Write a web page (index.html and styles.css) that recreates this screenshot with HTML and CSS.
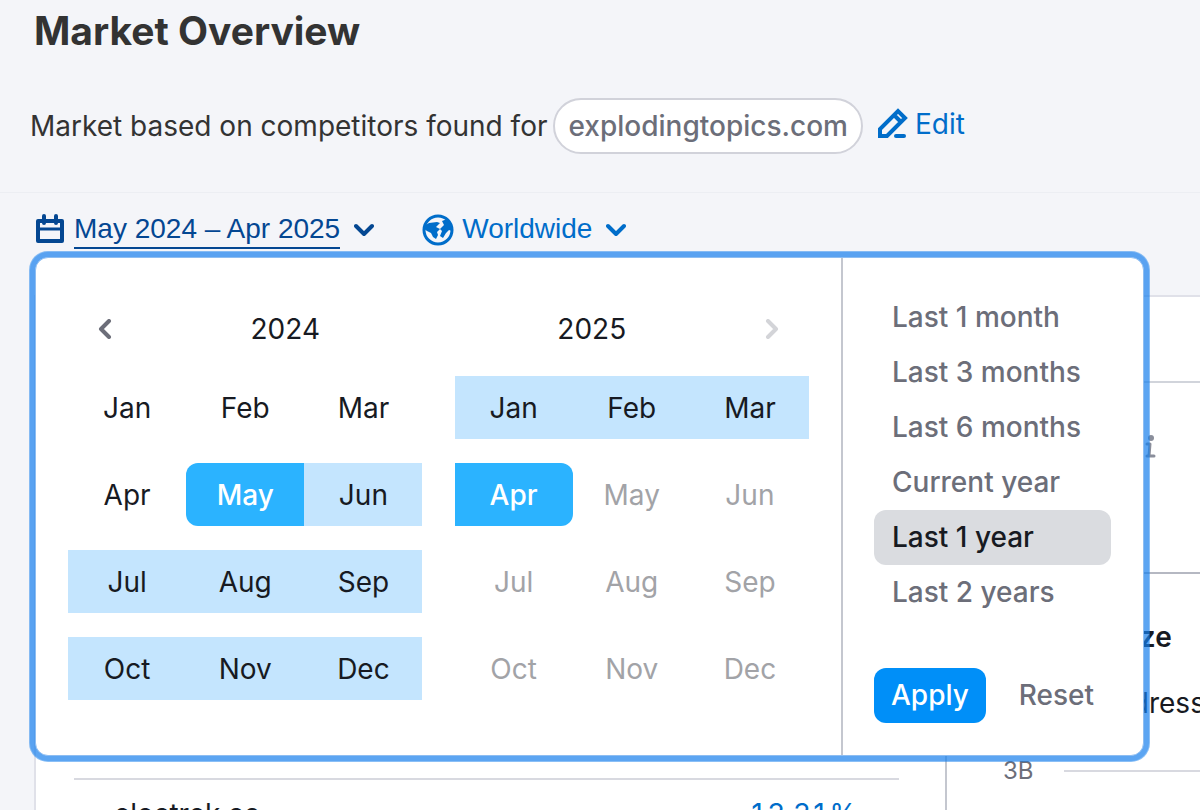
FILE: index.html
```html
<!DOCTYPE html>
<html lang="en">
  <head>
    <meta charset="utf-8" />
    <meta name="viewport" content="width=device-width, initial-scale=1" />
    <title>Market Overview</title>
    <link rel="stylesheet" href="styles.css" />
  </head>
  <body>
    <header class="header">
      <h1>Market Overview</h1>
      <div class="based-on">
        <span>Market based on competitors found for</span>
        <span class="domain">explodingtopics.com</span>
        <a href="#" class="edit">
          <svg width="32" height="32" viewBox="0 0 32 32" fill="none" stroke="currentColor" stroke-width="4">
            <path d="M3 28v-7L21 3l7 7L10 28z M17 7l7 7" />
            <path d="M19 28h8" stroke-linecap="round" />
          </svg>
          <span>Edit</span>
        </a>
      </div>
    </header>

    <div class="filters">
      <button type="button" class="filter active" aria-expanded="true">
        <svg width="30" height="32" viewBox="0 0 30 32" fill="none" stroke="currentColor" stroke-width="4" stroke-linejoin="round">
          <path d="M2 7h24v20H2z" />
          <path d="M2 15h24" stroke-width="3" />
          <path d="M8 2v7M20 2v7" stroke-linecap="round" />
        </svg>
        <span class="filter-text">May 2024 – Apr 2025</span>
        <svg class="arrow" width="20" height="14" viewBox="0 0 20 14" fill="none" stroke="currentColor" stroke-width="4" stroke-linecap="round" stroke-linejoin="round">
          <path d="M2 3l8 8 8-8" />
        </svg>
      </button>
      <button type="button" class="filter">
        <svg width="32" height="32" viewBox="0 0 32 32">
          <circle cx="16" cy="16" r="14" fill="none" stroke="currentColor" stroke-width="3" />
          <path d="M2 12l5-3 8-1 3 1-4 4 4 2-3 3 1 3-2 4-3-2-2-4-4-2-3-2z" fill="currentColor" />
          <path d="M20 7l5-2 4 6 1 6-3-1-3 3-3 5-3-2 2-5-2-2 4-4z" fill="currentColor" />
        </svg>
        <span class="filter-text">Worldwide</span>
        <svg class="arrow" width="20" height="14" viewBox="0 0 20 14" fill="none" stroke="currentColor" stroke-width="4" stroke-linecap="round" stroke-linejoin="round">
          <path d="M2 3l8 8 8-8" />
        </svg>
      </button>

      <div class="popper">
        <div class="calendars">
          <div class="calendar">
            <div class="calendar-head">
              <button type="button" class="nav prev" aria-label="Previous year">
                <svg width="14" height="20" viewBox="0 0 14 20" fill="none" stroke="currentColor" stroke-width="4" stroke-linecap="round" stroke-linejoin="round">
                  <path d="M11 2l-8 8 8 8" />
                </svg>
              </button>
              <span class="year">2024</span>
            </div>
            <div class="months">
              <button type="button" class="month">Jan</button>
              <button type="button" class="month">Feb</button>
              <button type="button" class="month">Mar</button>
              <button type="button" class="month">Apr</button>
              <button type="button" class="month start">May</button>
              <button type="button" class="month in-range">Jun</button>
              <button type="button" class="month in-range">Jul</button>
              <button type="button" class="month in-range">Aug</button>
              <button type="button" class="month in-range">Sep</button>
              <button type="button" class="month in-range">Oct</button>
              <button type="button" class="month in-range">Nov</button>
              <button type="button" class="month in-range">Dec</button>
            </div>
          </div>
          <div class="calendar">
            <div class="calendar-head">
              <span class="year">2025</span>
              <button type="button" class="nav next" aria-label="Next year" disabled>
                <svg width="14" height="20" viewBox="0 0 14 20" fill="none" stroke="currentColor" stroke-width="4" stroke-linecap="round" stroke-linejoin="round">
                  <path d="M3 2l8 8-8 8" />
                </svg>
              </button>
            </div>
            <div class="months">
              <button type="button" class="month in-range">Jan</button>
              <button type="button" class="month in-range">Feb</button>
              <button type="button" class="month in-range">Mar</button>
              <button type="button" class="month end">Apr</button>
              <button type="button" class="month" disabled>May</button>
              <button type="button" class="month" disabled>Jun</button>
              <button type="button" class="month" disabled>Jul</button>
              <button type="button" class="month" disabled>Aug</button>
              <button type="button" class="month" disabled>Sep</button>
              <button type="button" class="month" disabled>Oct</button>
              <button type="button" class="month" disabled>Nov</button>
              <button type="button" class="month" disabled>Dec</button>
            </div>
          </div>
        </div>
        <div class="periods">
          <button type="button" class="period">Last 1 month</button>
          <button type="button" class="period">Last 3 months</button>
          <button type="button" class="period">Last 6 months</button>
          <button type="button" class="period">Current year</button>
          <button type="button" class="period selected">Last 1 year</button>
          <button type="button" class="period">Last 2 years</button>
          <div class="actions">
            <button type="button" class="apply">Apply</button>
            <button type="button" class="reset">Reset</button>
          </div>
        </div>
      </div>
    </div>

    <main class="report">
      <div class="report-head"></div>
      <div class="report-body">
        <section class="domains">
          <div class="domain-row"><span>gizmodo.com</span></div>
          <div class="domain-row">
            <span>electrek.co</span>
            <a href="#">13.31%</a>
          </div>
        </section>
        <section class="market">
          <div class="summary">
            <svg width="12" height="24" viewBox="0 0 12 24" fill="none" stroke="currentColor" stroke-width="3" stroke-linecap="round" stroke-linejoin="round">
              <path d="M2 9h3l-1 12M2 21h7" />
              <circle cx="6" cy="3" r="3" fill="currentColor" stroke="none" />
            </svg>
          </div>
          <h2>Market Size</h2>
          <div class="legend"><i class="dot"></i>Total Addressable Market</div>
          <div class="axis"><span>3B</span></div>
        </section>
      </div>
    </main>
  </body>
</html>
```

FILE: styles.css
```css
* {
  box-sizing: border-box;
}

body {
  margin: 0;
  height: 100vh;
  overflow: hidden;
  display: flex;
  flex-direction: column;
  background: #f4f5f9;
  color: #171a22;
  font-family: Inter, sans-serif;
  font-size: 28px;
  line-height: 36px;
}

button {
  border: 0;
  padding: 0;
  background: none;
  color: inherit;
  font: inherit;
  cursor: pointer;
}

a {
  color: #006dca;
  text-decoration: none;
}

svg {
  flex: none;
}

/* header */

.header {
  flex: none;
  padding: 7px 30px 38px;
  border-bottom: 1px solid #eceef3;
  color: #333;
}

h1 {
  margin: 0 4px 43px;
  font-size: 39px;
  line-height: 48px;
  font-weight: 700;
}

.based-on {
  display: flex;
  align-items: center;
  gap: 6px;
}

.domain {
  padding: 8px 13px;
  border: 2px solid #d1d2da;
  border-radius: 28px;
  background: #fff;
  color: #6c6e79;
  font-weight: 500;
}

.edit {
  display: flex;
  align-items: center;
  gap: 6px;
  margin: 0 0 4px 8px;
}

/* filters */

.filters {
  position: relative;
  flex: none;
  display: flex;
  gap: 48px;
  padding: 18px 36px 46px;
}

.filter {
  display: flex;
  align-items: center;
  gap: 8px;
  color: #006dca;
  font-family: "Liberation Sans", Arial, sans-serif;
}

.filter.active {
  color: #044792;
}

.filter-text {
  border-bottom: 2px solid transparent;
}

.active .filter-text {
  border-color: currentColor;
}

.arrow {
  margin-left: 6px;
}

/* date popup */

.popper {
  position: absolute;
  z-index: 1;
  top: 64px;
  left: 35px;
  right: 56px;
  display: flex;
  border: 1px solid #8dbdf2;
  border-radius: 13px;
  background: #fff;
  box-shadow: 0 0 0 5px rgba(22, 128, 237, 0.4),
    0 0 0 6px rgba(22, 128, 237, 0.5);
}

.calendars {
  flex: 1;
  display: flex;
  gap: 32px;
  padding: 32px;
}

.calendar {
  flex: 1;
}

.calendar-head {
  display: flex;
  height: 78px;
  margin-bottom: 8px;
  align-items: center;
}

.nav {
  width: 80px;
  height: 56px;
  color: #6c6e79;
}

.nav:disabled {
  color: #d3d4d8;
}

.prev {
  padding-right: 6px;
}

.next {
  padding-left: 6px;
}

.year {
  flex: 1;
  text-align: center;
}

.months {
  display: grid;
  grid-template-columns: repeat(3, 1fr);
  row-gap: 24px;
}

.month {
  height: 63px;
}

.month:disabled {
  color: #a2a3a7;
}

.in-range {
  background: #c4e5fe;
}

.start,
.end {
  background: #2bb3ff;
  color: #fff;
  font-weight: 500;
}

.start {
  border-radius: 12px 0 0 12px;
}

.end {
  border-radius: 0 12px 12px 0;
}

.periods {
  display: flex;
  flex-direction: column;
  width: 302px;
  padding: 32px 32px 32px 31px;
  border-left: 2px solid #c4c7cf;
}

.period {
  height: 55px;
  padding: 0 18px 2px;
  border-radius: 12px;
  color: #6c6e79;
  font-weight: 500;
  text-align: left;
}

.period.selected {
  background: #dadce0;
  color: #171a22;
}

.actions {
  display: flex;
  margin-top: 48px;
}

.apply,
.reset {
  height: 55px;
  padding: 0 17px 2px;
  border-radius: 12px;
  font-weight: 500;
}

.apply {
  margin-right: 16px;
  background: #008ff8;
  color: #fff;
}

.reset {
  color: #6c6e79;
}

/* report */

.report {
  flex: 1;
  display: flex;
  flex-direction: column;
  min-height: 0;
  margin-left: 34px;
  border: solid #e0e1e9;
  border-width: 2px 0 0 2px;
  background: #fff;
}

.report-head {
  flex: none;
  height: 86px;
  border-bottom: 2px solid #d1d4db;
}

.report-body {
  flex: 1;
  display: flex;
}

.domains {
  flex: 1;
  padding: 309px 46px 0 38px;
  border-right: 2px solid #c4c7cf;
}

.domain-row {
  display: flex;
  justify-content: space-between;
  height: 88px;
  padding: 16px 42px 0 40px;
  border-bottom: 2px solid #d8d9e0;
  font-variant-numeric: tabular-nums;
}

.market {
  width: 253px;
  white-space: nowrap;
}

.summary {
  display: flex;
  align-items: center;
  height: 191px;
  padding: 0 0 62px 198px;
  border-bottom: 2px solid #b5b8c2;
  color: #8a8e9b;
}

h2 {
  margin: 45px 0 30px 65px;
  font-size: 28px;
  line-height: 36px;
  font-weight: 600;
}

.legend {
  display: flex;
  align-items: center;
  gap: 8px;
  margin-left: 48px;
}

.dot {
  flex: none;
  width: 20px;
  height: 20px;
  border-radius: 6px;
  background: #2bb3ff;
}

.axis {
  display: flex;
  align-items: center;
  gap: 30px;
  margin: 32px 0 0 56px;
  color: #6c6e79;
  font-size: 24px;
}

.axis::after {
  content: "";
  flex: 1;
  height: 2px;
  background: #d8d9e0;
}
```
